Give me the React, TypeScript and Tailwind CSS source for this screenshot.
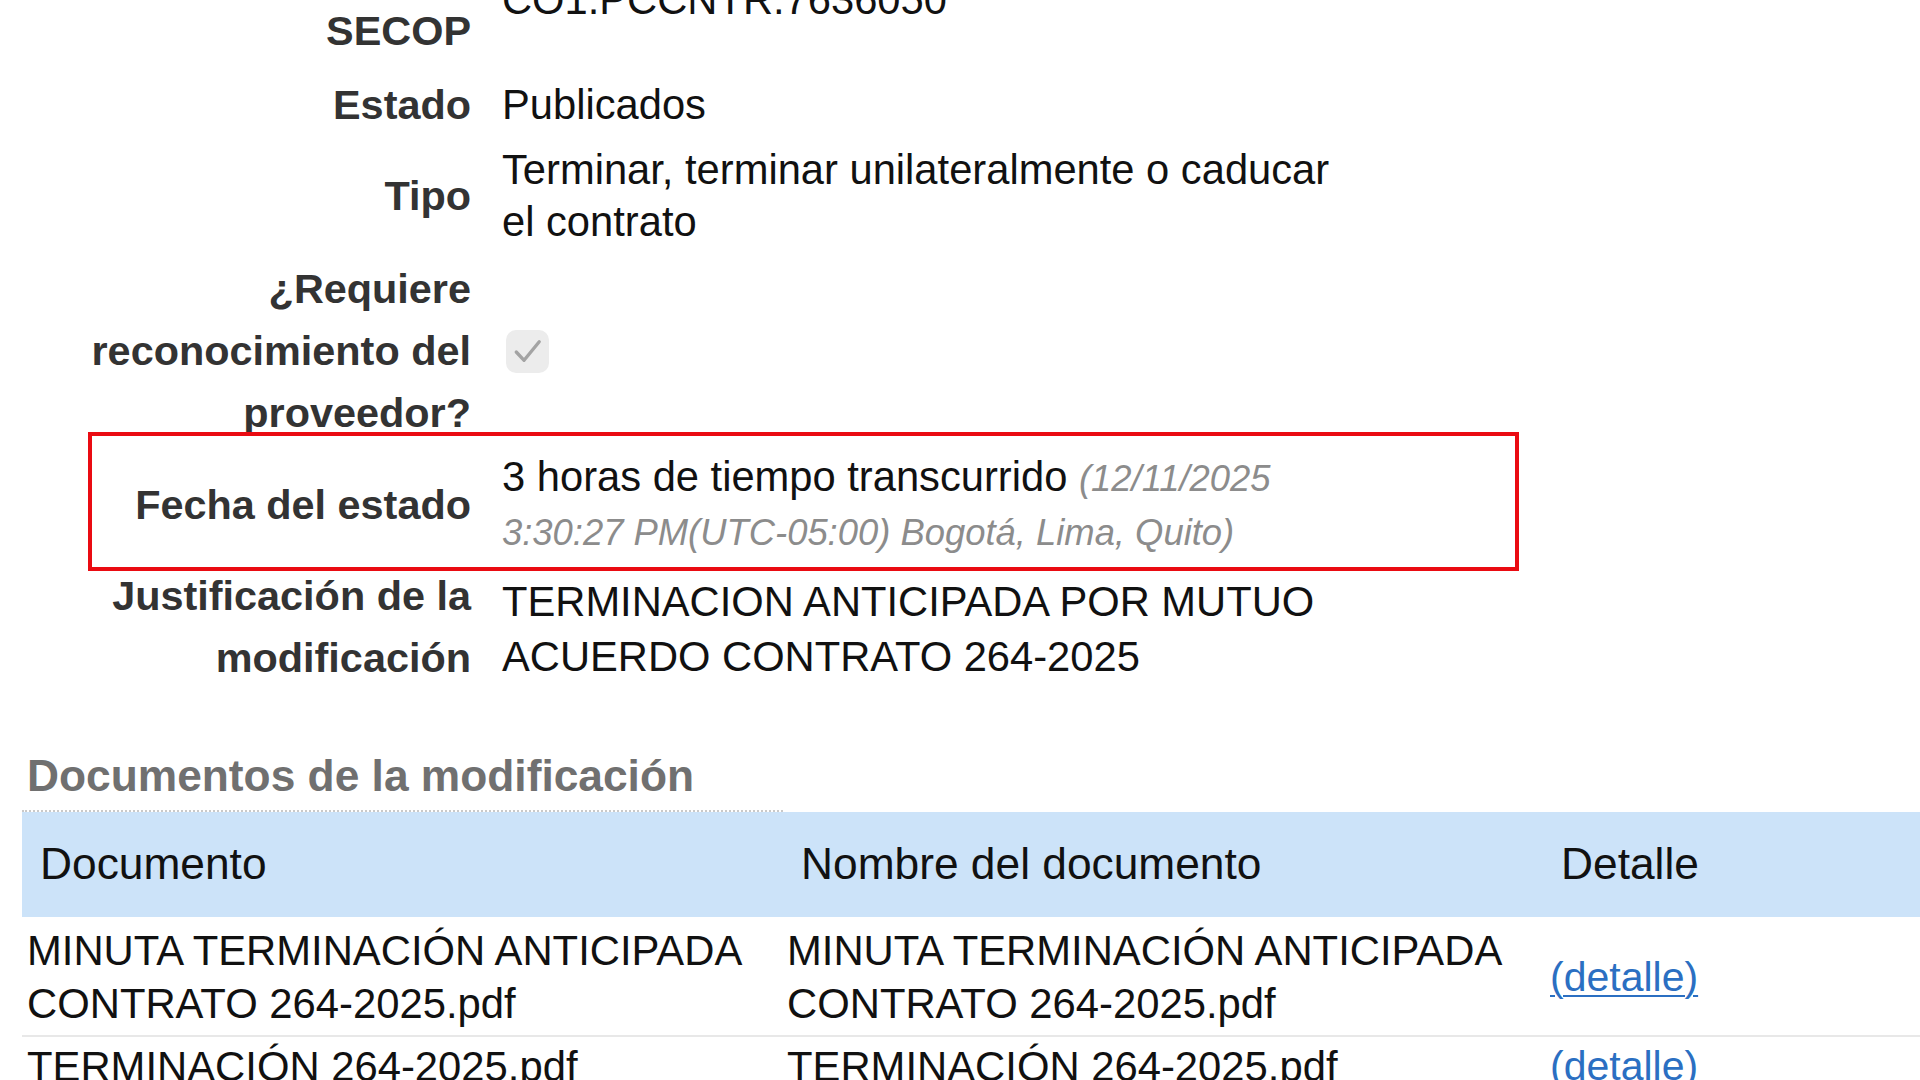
import React from "react";

function Row({
  label,
  children,
  className = "py-[5px]",
}: {
  label: React.ReactNode;
  children: React.ReactNode;
  className?: string;
}) {
  return (
    <div className={`flex items-center ${className}`}>
      <div className="w-[383px] shrink-0 text-right font-bold text-[41.4px] leading-[62px] text-[#333333] whitespace-nowrap">
        {label}
      </div>
      <div className="pl-[31px] w-[881px] text-[41.7px] leading-[52px] text-[#111111]">
        {children}
      </div>
    </div>
  );
}

function CheckIcon() {
  return (
    <div className="ml-[4px] w-[43px] h-[43px] rounded-[10px] bg-[#ececec] flex items-center justify-center">
      <svg width="43" height="43" viewBox="0 0 44 44" fill="none">
        <path
          d="M10.5 22.5 L18.5 31 L34 12"
          stroke="#a3a3a3"
          strokeWidth="3.4"
          strokeLinecap="round"
          strokeLinejoin="round"
        />
      </svg>
    </div>
  );
}

export default function App() {
  return (
    <div className="w-[1920px] h-[1080px] overflow-hidden bg-white font-['Liberation_Sans',Arial,Helvetica,sans-serif]">
      <div className="ml-[88px] w-[1431px] mt-[-67px]">
        <Row
          label={
            <>
              ID del contrato en
              <br />
              SECOP
            </>
          }
        >
          CO1.PCCNTR.7636050
        </Row>
        <Row label="Estado" className="pt-[7px] pb-[3px]">
          Publicados
        </Row>
        <Row label="Tipo">
          <div className="w-[850px]">
            Terminar, terminar unilateralmente o caducar el contrato
          </div>
        </Row>
        <Row
          label={
            <>
              ¿Requiere
              <br />
              reconocimiento del
              <br />
              proveedor?
            </>
          }
        >
          <CheckIcon />
        </Row>
        <div className="relative mt-[-17px] flex items-center border-4 border-[#ea0b12] pt-[15px] pb-[8px]">
          <div className="w-[379px] shrink-0 text-right font-bold text-[41.4px] leading-[62px] text-[#333333] whitespace-nowrap">
            Fecha del estado
          </div>
          <div className="pl-[31px] w-[881px] text-[41.7px] leading-[52px] text-[#111111]">
            <div className="w-[850px]">
              3 horas de tiempo transcurrido{" "}
              <span className="italic text-[36.4px] text-[#8c8c8c]">
                (12/11/2025 3:30:27 PM(UTC-05:00) Bogotá, Lima, Quito)
              </span>
            </div>
          </div>
        </div>
        <Row
          className="mt-[-11px] py-[5px]"
          label={
            <>
              Justificación de la
              <br />
              modificación
            </>
          }
        >
          <div className="w-[850px] leading-[55px] pt-[3px]">
            TERMINACION ANTICIPADA POR MUTUO ACUERDO CONTRATO 264-2025
          </div>
        </Row>
      </div>

      <div className="ml-[22px] mt-[58px] w-[761px] pl-[5px] pb-[10px] border-b-2 border-dotted border-[#c9c9c9]">
        <h2 className="font-bold text-[44.3px] leading-[48px] text-[#707070]">
          Documentos de la modificación
        </h2>
      </div>

      <div className="ml-[22px] w-[1898px]">
        <div className="grid grid-cols-[761px_762px_1fr] h-[105px] items-center bg-[#cce3f9] text-[44.3px] text-[#111111]">
          <div className="pl-[18px]">Documento</div>
          <div className="pl-[18px]">Nombre del documento</div>
          <div className="pl-[16px]">Detalle</div>
        </div>
        <div className="grid grid-cols-[761px_762px_1fr] items-center pt-[7px] pb-[5px] border-b-2 border-[#e8e8e8] text-[41.8px] leading-[53px] text-[#111111]">
          <div className="pl-[5px] pr-[10px]">
            MINUTA TERMINACIÓN ANTICIPADA CONTRATO 264-2025.pdf
          </div>
          <div className="pl-[4px] pr-[10px]">
            MINUTA TERMINACIÓN ANTICIPADA CONTRATO 264-2025.pdf
          </div>
          <div className="pl-[5px]">
            <a href="#" className="text-[#2b6fc2] text-[41px] underline underline-offset-[4px] decoration-2">
              (detalle)
            </a>
          </div>
        </div>
        <div className="grid grid-cols-[761px_762px_1fr] items-center pt-[2px] pb-[6px] text-[41.8px] leading-[53px] text-[#111111]">
          <div className="pl-[5px] pr-[10px]">TERMINACIÓN 264-2025.pdf</div>
          <div className="pl-[4px] pr-[10px]">TERMINACIÓN 264-2025.pdf</div>
          <div className="pl-[5px]">
            <a href="#" className="text-[#2b6fc2] text-[41px]">
              (detalle)
            </a>
          </div>
        </div>
      </div>
    </div>
  );
}
